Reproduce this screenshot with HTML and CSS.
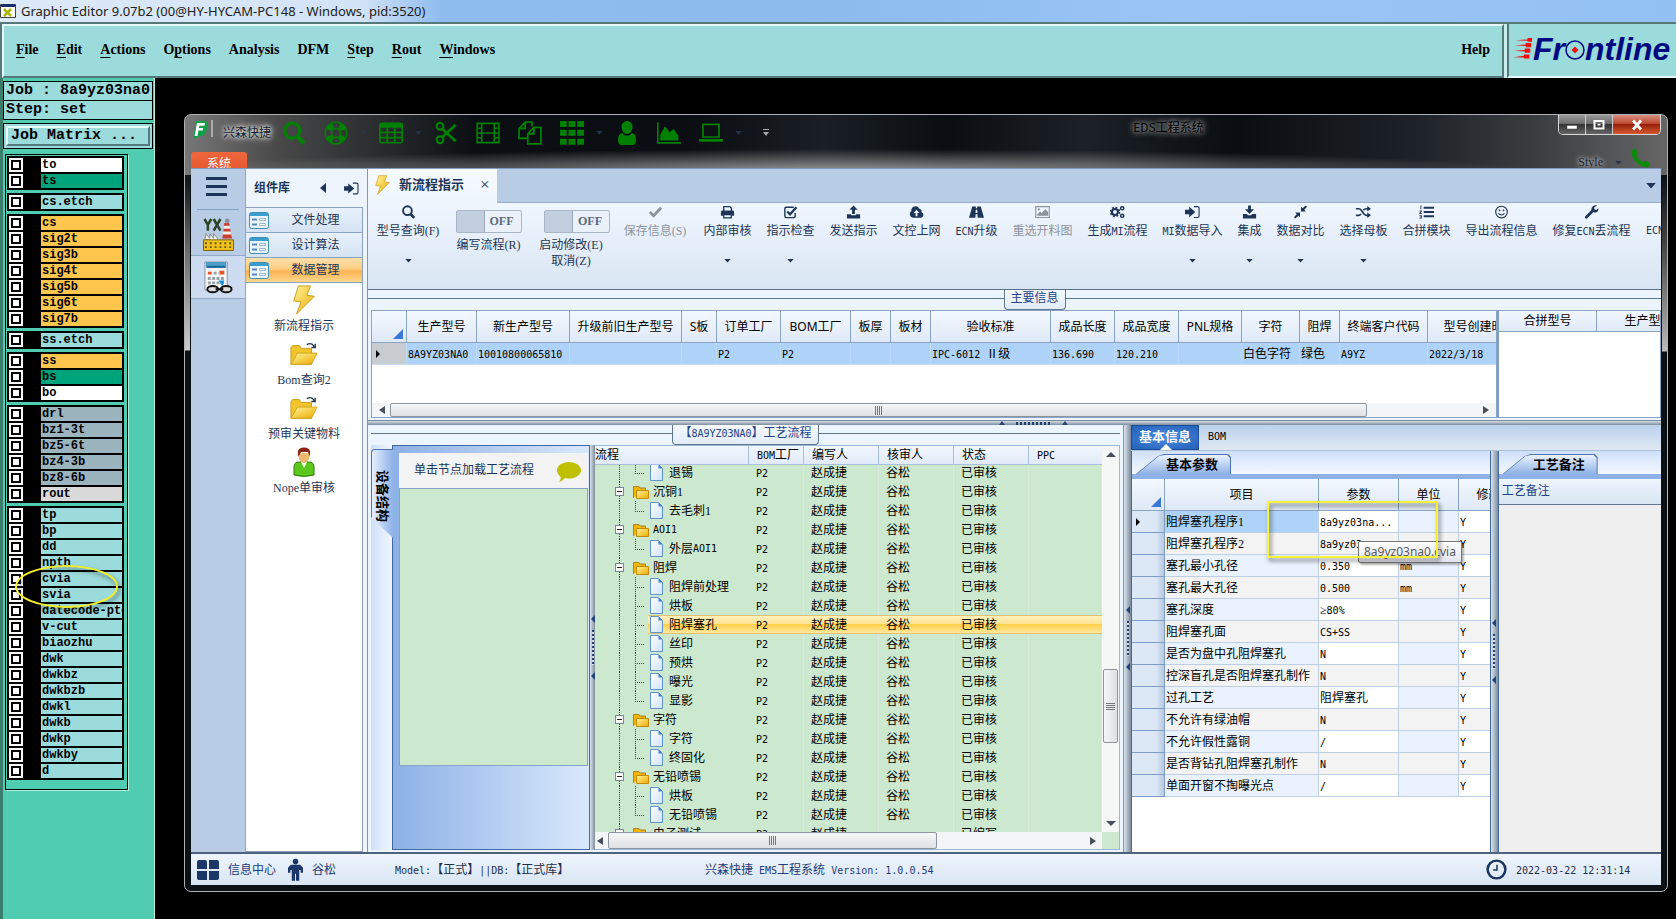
FILE: index.html
```html
<!DOCTYPE html>
<html lang="zh-CN">
<head>
<meta charset="utf-8">
<title>Graphic Editor 9.07b2</title>
<link rel="stylesheet" href="styles.css">
</head>
<body>
<svg class="defs" aria-hidden="true">
  <defs>
    <linearGradient id="gold" x1="0" y1="0" x2="1" y2="1"><stop offset="0" stop-color="#fff59a"/><stop offset="1" stop-color="#eda900"/></linearGradient>
    <linearGradient id="sheet" x1="0" y1="0" x2="1" y2="1"><stop offset="0" stop-color="#fff"/><stop offset="1" stop-color="#cfe2f8"/></linearGradient>
  </defs>
  <symbol id="search" viewBox="0 0 16 16"><circle cx="6.8" cy="6.5" r="5" fill="none" stroke="currentColor" stroke-width="2.2"/><path d="M10 10l4.6 4.8" stroke="currentColor" stroke-width="3"/></symbol>
  <symbol id="ring" viewBox="0 0 16 16"><circle cx="8" cy="8" r="7.2" fill="none" stroke="currentColor"/><circle cx="8" cy="8" r="3" fill="none" stroke="currentColor"/><circle cx="8" cy="8" r="5.1" fill="none" stroke="currentColor" stroke-width="4" stroke-dasharray="4 4" stroke-dashoffset="-2"/></symbol>
  <symbol id="table" viewBox="0 0 16 16"><path fill="currentColor" fill-rule="evenodd" d="M1.500 1h13A1.500 1.500 0 0 1 16 2.500v11a1.500 1.500 0 0 1-1.500 1.500h-13A1.500 1.500 0 0 1 0 13.500v-11A1.500 1.500 0 0 1 1.500 1zM1.200 4.500V7h3.700V4.500zm4.900 0V7h3.800V4.500zm5 0V7h3.700V4.500zM1.200 8.100v2.400h3.700V8.100zm4.900 0v2.400h3.800V8.100zm5 0v2.400h3.700V8.100zM1.200 11.600V14h3.700v-2.400zm4.900 0V14h3.800v-2.400zm5 0V14h3.700v-2.400z"/></symbol>
  <symbol id="cut" viewBox="0 0 16 16"><g fill="none" stroke="currentColor" stroke-width="1.500"><circle cx="4" cy="3.500" r="2.200"/><circle cx="4" cy="12.500" r="2.200"/><path d="M5.600 5.300L14.500 13.500M5.600 10.700L14.500 2.500" stroke-width="1.800"/></g></symbol>
  <symbol id="film" viewBox="0 0 18 16"><path fill="none" stroke="currentColor" stroke-width="1.200" d="M.8.8h16.400v14.400H.8zM4.300.8v14.400M13.700.8v14.400M4.300 8h9.400M.8 4.400h3.500M.8 8h3.500M.8 11.600h3.500M13.700 4.400h3.500M13.700 8h3.500M13.700 11.600h3.500"/></symbol>
  <symbol id="copy" viewBox="0 0 16 16"><path fill="none" stroke="currentColor" stroke-width="1.200" d="M6 11.500H.7V5L4.800.7H9.300v3M4.800.7V5H.7M6.500 8.500L10.600 4.200h4.700v11H6.500zM10.600 4.200v4.300H6.500"/></symbol>
  <symbol id="grid" viewBox="0 0 16 16"><path fill="currentColor" d="M0 0h4.500v4H0zM5.700 0h4.600v4H5.700zM11.500 0H16v4h-4.500zM0 5.900h4.500v4H0zM5.700 5.900h4.600v4H5.700zM11.500 5.900H16v4h-4.500zM0 11.800h4.500v4H0zM5.700 11.800h4.600v4H5.700zM11.500 11.800H16v4h-4.500z"/></symbol>
  <symbol id="user" viewBox="0 0 16 16"><path fill="currentColor" d="M8 0a3.600 3.600 0 0 1 3.600 4.200C11.600 6.700 10 8.600 8 8.600S4.400 6.700 4.400 4.200A3.600 3.600 0 0 1 8 0zM4.800 8C5.700 9.200 6.700 9.800 8 9.800s2.300-.6 3.200-1.800c1.900.3 2.800 2 2.800 4.800 0 1.800-.9 3.200-2.400 3.200H4.400C2.900 16 2 14.600 2 12.800 2 10 2.900 8.300 4.800 8z"/></symbol>
  <symbol id="chart" viewBox="0 0 18 16"><path fill="currentColor" d="M0 0h1.200v14.800H18V16H0zM2.400 13.600V9.500L6 3l3.500 4.500L12.500 5l3.500 5v3.600z"/></symbol>
  <symbol id="laptop" viewBox="0 0 18 16"><path fill="none" stroke="currentColor" stroke-width="1.300" d="M3 1.500h12v9.500H3z"/><path fill="currentColor" d="M0 12.500h18v1.300q0 .7-1 .7H1q-1 0-1-.7z"/></symbol>
  <symbol id="phone" viewBox="0 0 16 16"><path fill="currentColor" d="M1 2.500C1.500 1 3 .3 4 .5l2 3.500c0 1-1.200 1.600-1.200 2.200C5.500 8 8 10.600 10 11.300c.6 0 1.200-1.200 2-1.200l3.700 2.100c.3 1-.7 2.700-2 3.100C8 16.500-.5 8 1 2.500z"/></symbol>
  <symbol id="caret" viewBox="0 0 8 5"><path fill="currentColor" d="M0 0h8L4 4.500z"/></symbol>
  <symbol id="enter" viewBox="0 0 16 14"><path fill="currentColor" d="M0 4.500h4.500V1.500L11 7l-6.500 5.500v-3H0z"/><path fill="none" stroke="currentColor" stroke-width="1.200" d="M9.500 1.200h4q1.500 0 1.500 1.500v8.600q0 1.500-1.500 1.500h-4"/></symbol>
  <symbol id="check" viewBox="0 0 16 14"><path fill="none" stroke="currentColor" stroke-width="3" d="M2 7l4 4L14 2.500"/></symbol>
  <symbol id="print" viewBox="0 0 16 14"><path fill="none" stroke="currentColor" stroke-width="1.400" d="M4 6V1.200h6.500L12.200 3v3M4 9.700h8v3.500H4z"/><path fill="currentColor" d="M1 7q0-1.500 1.500-1.500h11Q15 5.500 15 7v4h-2.300V9H3.300v2H1z"/></symbol>
  <symbol id="checkbox" viewBox="0 0 16 14"><path fill="none" stroke="currentColor" stroke-width="1.500" d="M13 8v3.500q0 1.500-1.500 1.500h-8Q2 13 2 11.500v-8Q2 2 3.500 2h8"/><path fill="none" stroke="currentColor" stroke-width="2.300" d="M4.500 6.500l3 3L14.300 2"/></symbol>
  <symbol id="upload" viewBox="0 0 16 14"><path fill="currentColor" d="M8 0l4.500 4.500h-3V9h-3V4.500h-3zM1 9.500h4.500v1h5v-1H15V14H1z"/></symbol>
  <symbol id="download" viewBox="0 0 16 14"><path fill="currentColor" d="M6.500 0h3v4h3.300L8 9 3.200 4h3.300zM1 9h4l1.500 1.500h3L11 9h4v5H1z"/></symbol>
  <symbol id="cloud" viewBox="0 0 16 14"><path fill="currentColor" fill-rule="evenodd" d="M4 13a4 4 0 0 1-1.500-7.200A4.500 4.500 0 0 1 11 3.500a3 3 0 0 1 2.300 3.700A3 3 0 0 1 13 13zM8 4.500L4.800 8H7v3.500h2V8h2.200z"/></symbol>
  <symbol id="road" viewBox="0 0 16 14"><path fill="currentColor" fill-rule="evenodd" d="M3.500 1h3.800v2h1.400V1h3.800L16 13H9.200L9 9.500H7L6.800 13H0zM7.200 4.500L7 8h2l-.2-3.500z"/></symbol>
  <symbol id="image" viewBox="0 0 16 14"><path fill="none" stroke="currentColor" stroke-width="1.200" d="M.8 1.200h14.400v11.600H.8z"/><path fill="currentColor" d="M2.500 11V9l3-2.500L7 8l4-4 3 3v4z"/><circle cx="4" cy="4.200" r="1.200" fill="currentColor"/></symbol>
  <symbol id="cogs" viewBox="0 0 16 14"><g fill="none" stroke="currentColor"><circle cx="5.300" cy="7" r="3.200" stroke-width="2.200"/><circle cx="5.300" cy="7" r="4.900" stroke-width="1.500" stroke-dasharray="2 1.850"/><circle cx="13" cy="3" r="1.700" stroke-width="1.600"/><circle cx="13" cy="11" r="1.700" stroke-width="1.600"/></g></symbol>
  <symbol id="compress" viewBox="0 0 16 14"><path fill="currentColor" d="M8.500 6.500V1.500L10.300 3 13.500 0 15 1.500 12 4.500l1.700 2zM7.500 7.500v5L5.800 11 2.500 14 1 12.500l3-3-1.700-2z"/></symbol>
  <symbol id="shuffle" viewBox="0 0 16 14"><path fill="none" stroke="currentColor" stroke-width="1.800" d="M0 3.500h3q1.500 0 2.500 1.500l3 4q1 1.500 2.500 1.500h2M0 10.500h3q1.500 0 2.500-1.500M8 5.200q1.200-1.700 3-1.700h2"/><path fill="currentColor" d="M12 .5l4 3-4 3zM12 7.500l4 3-4 3z"/></symbol>
  <symbol id="list" viewBox="0 0 16 14"><path fill="currentColor" d="M5 1.500h11v2H5zM5 6h11v2H5zM5 10.500h11v2H5zM1.500 0h1v4h-1zM.5 5.500h2.500v1L1.500 8H3v1H.3V8L1.800 6.500H.5zM.5 10.500H3v3.500H.5v-.8h1.500v-.6H1v-.7h1v-.6H.5z"/></symbol>
  <symbol id="smile" viewBox="0 0 16 14"><circle cx="8" cy="7" r="6.200" fill="none" stroke="currentColor" stroke-width="1.200"/><path d="M4.800 8.500q3.200 3.500 6.400 0" fill="none" stroke="currentColor" stroke-width="1.200"/><circle cx="5.900" cy="5.200" r="1" fill="currentColor"/><circle cx="10.100" cy="5.200" r="1" fill="currentColor"/></symbol>
  <symbol id="wrench" viewBox="0 0 16 14"><path d="M2.500 12.500L9 6" stroke="currentColor" stroke-width="3" stroke-linecap="round"/><path fill="currentColor" d="M14 0L11 2v2l2 .8L15.300 3C16 6 13.500 8 11 7.500L8 6C7 2.500 10-.8 14 0z"/></symbol>
  <symbol id="bolt" viewBox="0 0 24 32"><path fill="url(#gold)" stroke="#c79a17" d="M6 1h13l-4 10 8 1L4 31l5-13-8-1z"/></symbol>
  <symbol id="folder" viewBox="0 0 30 26"><path fill="#f1c52b" stroke="#c69a1c" d="M1 24V6l2-2h7l2 3h11v17z"/><path fill="url(#gold)" stroke="#cfa21d" d="M1 24L8 12h21l-6 12z"/><path fill="none" stroke="#26384f" stroke-width="1.500" d="M18 3q5-3 8 2m1-3v4h-4"/></symbol>
  <symbol id="dir" viewBox="0 0 16 14"><path fill="#f5b400" stroke="#a9842c" d="M.5 13V1.500H6L7 3h5.500v2"/><path fill="url(#gold)" stroke="#c58b00" d="M3.500 5.500h12v8h-12z"/></symbol>
  <symbol id="page" viewBox="0 0 15 17"><path fill="url(#sheet)" stroke="#5e93cf" d="M1.500.5h8l4 4v12H1.500z"/><path fill="#3f7fd0" d="M9.500.5v4h4z"/></symbol>
  <symbol id="form" viewBox="0 0 20 17"><rect x=".5" y=".5" width="19" height="16" rx="2" fill="#eaf6fc" stroke="#3d8fb8"/><path fill="#3a9fd0" d="M1 1h18v3H1z"/><path fill="#5784c4" d="M3 6.500h5v2H3zM3 11.500h5v2H3z"/><path fill="#fff" stroke="#9ebad0" d="M10.500 6.500h6v2h-6zM10.500 11.500h6v2h-6z"/></symbol>
</svg>

<header class="app-title">
  <svg class="app-mark" viewBox="0 0 16 16"><path fill="#fff" stroke="#444" d="M.5 1.500h15v13H.5z"/><path fill="#1b2f6b" d="M1 1h14v3H1z"/><path d="M4 6l7 7M11 6l-7 7" stroke="#a9b400" stroke-width="2.500"/></svg>
  <span>Graphic Editor 9.07b2 (00@HY-HYCAM-PC148 - Windows, pid:3520)</span>
</header>
<div class="menu-row">
  <nav class="menubar">
    <button><u>F</u>ile</button><button><u>E</u>dit</button><button><u>A</u>ctions</button><button>O<u>p</u>tions</button><button>Analysis</button><button>DFM</button><button><u>S</u>tep</button><button><u>R</u>out</button><button><u>W</u>indows</button><button class="help">Help</button>
  </nav>
  <div class="brand">
    <svg class="stripes" viewBox="0 0 22 24"><path fill="#f00f0f" d="M3 2.500l13-1V0h5v4h-5V3zM2 8l12-1V5.500h6v4.500h-6V8.700zM1 14l12-1v-1.500h6V16h-6v-1.300zM0 21l12-1.500V18h6v4.500h-6V21.400z"/></svg>
    <span>Fr</span><svg class="target" viewBox="0 0 20 20"><circle cx="10" cy="10" r="9" fill="none" stroke="#000b82" stroke-width="1.500"/><path fill="#f01010" d="M10 6.500l3.500 3.500-3.500 3.500L6.500 10z"/></svg><span>ntline</span>
  </div>
</div>

<div class="workspace">
  <aside class="side">
    <div class="job">Job : 8a9yz03na0</div>
    <div class="job">Step: set</div>
    <div class="matrix"><button>Job Matrix ...</button></div>
    <div class="layers">
      <div class="set">
        <label class="white"><input type="checkbox"><span>to</span></label>
        <label class="green"><input type="checkbox"><span>ts</span></label>
      </div>
      <div class="set"><label><input type="checkbox"><span>cs.etch</span></label></div>
      <div class="set gold">
        <label><input type="checkbox"><span>cs</span></label>
        <label><input type="checkbox"><span>sig2t</span></label>
        <label><input type="checkbox"><span>sig3b</span></label>
        <label><input type="checkbox"><span>sig4t</span></label>
        <label><input type="checkbox"><span>sig5b</span></label>
        <label><input type="checkbox"><span>sig6t</span></label>
        <label><input type="checkbox"><span>sig7b</span></label>
      </div>
      <div class="set"><label><input type="checkbox"><span>ss.etch</span></label></div>
      <div class="set gold">
        <label><input type="checkbox"><span>ss</span></label>
        <label class="green"><input type="checkbox"><span>bs</span></label>
        <label class="white"><input type="checkbox"><span>bo</span></label>
      </div>
      <div class="set gray">
        <label><input type="checkbox"><span>drl</span></label>
        <label><input type="checkbox"><span>bz1-3t</span></label>
        <label><input type="checkbox"><span>bz5-6t</span></label>
        <label><input type="checkbox"><span>bz4-3b</span></label>
        <label><input type="checkbox"><span>bz8-6b</span></label>
        <label class="silver"><input type="checkbox"><span>rout</span></label>
      </div>
      <div class="set">
        <label><input type="checkbox"><span>tp</span></label>
        <label><input type="checkbox"><span>bp</span></label>
        <label><input type="checkbox"><span>dd</span></label>
        <label><input type="checkbox"><span>npth</span></label>
        <label><input type="checkbox"><span>cvia</span></label>
        <label><input type="checkbox"><span>svia</span></label>
        <label><input type="checkbox"><span>datecode-ptd</span></label>
        <label><input type="checkbox"><span>v-cut</span></label>
        <label><input type="checkbox"><span>biaozhu</span></label>
        <label><input type="checkbox"><span>dwk</span></label>
        <label><input type="checkbox"><span>dwkbz</span></label>
        <label><input type="checkbox"><span>dwkbzb</span></label>
        <label><input type="checkbox"><span>dwkl</span></label>
        <label><input type="checkbox"><span>dwkb</span></label>
        <label><input type="checkbox"><span>dwkp</span></label>
        <label><input type="checkbox"><span>dwkby</span></label>
        <label><input type="checkbox"><span>d</span></label>
        <i class="oval"></i>
      </div>
    </div>
  </aside>

  <div class="stage">
  <section class="win">
    <header class="caption">
      <div class="quick">
        <svg class="logo" viewBox="0 0 16 18"><path fill="#11a04a" d="M4 0h8q4 0 4 4l-2 7q-1 3-5 4l-8 3z"/><path fill="#fff" d="M5 2h8l-.6 2.700H7.300L6.900 7h4.400l-.6 2.500H6.400L5.500 15H2.600z"/></svg>
        <i class="bar"></i><b class="firm">兴森快捷</b>
        <button class="q" aria-label="查询"><svg><use href="#search"/></svg></button>
        <button class="q" aria-label="帮助"><svg><use href="#ring"/></svg></button>
        <svg class="dd"><use href="#caret"/></svg>
        <button class="q" aria-label="表格"><svg><use href="#table"/></svg></button>
        <svg class="dd"><use href="#caret"/></svg>
        <button class="q" aria-label="剪切"><svg><use href="#cut"/></svg></button>
        <button class="q" aria-label="影片"><svg><use href="#film"/></svg></button>
        <button class="q" aria-label="复制"><svg><use href="#copy"/></svg></button>
        <button class="q" aria-label="宫格"><svg><use href="#grid"/></svg></button>
        <svg class="dd"><use href="#caret"/></svg>
        <button class="q" aria-label="用户"><svg><use href="#user"/></svg></button>
        <button class="q" aria-label="图表"><svg><use href="#chart"/></svg></button>
        <button class="q" aria-label="电脑"><svg><use href="#laptop"/></svg></button>
        <svg class="dd"><use href="#caret"/></svg>
        <svg class="more" viewBox="0 0 8 8"><path fill="#aaa" d="M1 0h6v1H1zM1 3h6L4 7z"/></svg>
      </div>
      <h1>EDS工程系统</h1>
      <div class="ctl">
        <button aria-label="最小化"><svg viewBox="0 0 12 12"><path fill="#fff" stroke="#444" stroke-width=".5" d="M1 6.500h10v3.500H1z"/></svg></button>
        <button aria-label="最大化"><svg viewBox="0 0 12 12"><path fill="none" stroke="#fff" stroke-width="2" d="M1.500 2h9v7.500h-9z"/><path fill="#fff" d="M4.500 5h3v1.500h-3z"/></svg></button>
        <button class="close" aria-label="关闭"><svg viewBox="0 0 12 12"><path d="M2 1.500l8 9M10 1.500l-8 9" stroke="#fff" stroke-width="2.800"/></svg></button>
      </div>
      <button class="sys">系统</button>
      <div class="style"><span>Style</span><svg class="dd"><use href="#caret"/></svg><svg class="phone"><use href="#phone"/></svg></div>
    </header>

    <div class="body">
      <nav class="rail">
        <button class="burger" aria-label="菜单"><i></i><i></i><i></i></button>
        <button class="rail-btn" aria-label="YX"><svg viewBox="0 0 32 34"><path fill="none" stroke="#2c4424" stroke-width="2.600" d="M1.500 1l3.500 6 3.500-6M5 7v6M11 1l7 12M18 1l-7 12"/><path fill="#c9402e" d="M22 5h5l3 16h-10z"/><path fill="#eee" d="M21.600 8h6l.5 3h-7zM20.800 14h7.800l.6 3h-9z"/><circle cx="25" cy="3" r="2.500" fill="#8a94a6"/><path fill="#f6f6f6" stroke="#8a8a8a" d="M2 22l1-6 4 5v-5l4 5v-5l4 5v3z"/><path fill="#eec11e" stroke="#7a6210" d="M.5 22.500h31v11H.5z"/><path stroke="#6b5610" stroke-width="2" stroke-dasharray="2 3" d="M2 26h28M2 30h28"/></svg></button>
        <button class="rail-btn on" aria-label="日程"><svg viewBox="0 0 32 34"><path fill="#f4f6f8" stroke="#8b9299" d="M2 1h23v29H2z"/><path fill="#4f9cc9" d="M3 1h21v6H3z"/><path fill="#17679b" d="M4 5h19v2H4z"/><path fill="#e4572c" d="M5 11h4v3H5zM17 10h5v4h-5z"/><path stroke="#9aa0a6" stroke-width="3" stroke-dasharray="3 1.500" d="M5 18h17M5 22.500h17M11 12.500h5"/><path fill="#1492dc" d="M16 20h6l-2 6z"/><g fill="#ddd" stroke="#111" stroke-width="2"><ellipse cx="10" cy="29" rx="5.500" ry="3.200"/><ellipse cx="24" cy="29" rx="5.500" ry="3.200"/><path d="M13 29h8"/></g></svg></button>
      </nav>

      <aside class="lib">
        <header><h2>组件库</h2><svg class="tri" viewBox="0 0 6 10"><path fill="currentColor" d="M6 0v10L0 5z"/></svg><svg class="pin"><use href="#enter"/></svg></header>
        <div class="lib-in">
          <button class="acc"><svg><use href="#form"/></svg><span>文件处理</span></button>
          <button class="acc"><svg><use href="#form"/></svg><span>设计算法</span></button>
          <button class="acc on"><svg><use href="#form"/></svg><span>数据管理</span></button>
          <div class="apps">
            <button><svg><use href="#bolt"/></svg>新流程指示</button>
            <button><svg><use href="#folder"/></svg>Bom查询2</button>
            <button><svg><use href="#folder"/></svg>预审关键物料</button>
            <button><svg viewBox="0 0 22 30"><path fill="#5cc81e" stroke="#2f7d10" d="M1 28V20q0-5 5-5h10q5 0 5 5v8q-10 3-20 0z"/><path fill="#f3fbee" d="M8 15h6l-3 6z"/><path fill="#edb96c" d="M6 6h10v6q-2 4-5 4t-5-4z"/><path fill="#8b2317" d="M5 10V4q1-3.500 6-3.500T17 4v6l-2-5H8z"/></svg>Nope单审核</button>
          </div>
        </div>
      </aside>

      <main>
        <div class="tabs">
          <div class="tab"><svg class="tab-ico"><use href="#bolt"/></svg><b>新流程指示</b><button aria-label="关闭">×</button></div>
          <svg class="tabs-dd"><use href="#caret"/></svg>
        </div>
        <div class="ribbon">
          <button class="w82"><svg><use href="#search"/></svg>型号查询(F)<svg class="dd"><use href="#caret"/></svg></button>
          <label class="w79 tgl"><input type="checkbox"><span class="track">OFF</span>编写流程(R)</label>
          <label class="w86 tgl"><input type="checkbox"><span class="track">OFF</span>启动修改(E)<br>取消(Z)</label>
          <button class="w82" disabled><svg><use href="#check"/></svg>保存信息(S)</button>
          <button class="w63"><svg><use href="#print"/></svg>内部审核<svg class="dd"><use href="#caret"/></svg></button>
          <button class="w63"><svg><use href="#checkbox"/></svg>指示检查<svg class="dd"><use href="#caret"/></svg></button>
          <button class="w63"><svg><use href="#upload"/></svg>发送指示</button>
          <button class="w63"><svg><use href="#cloud"/></svg>文控上网</button>
          <button class="w57"><svg><use href="#road"/></svg><span><small>ECN</small>升级</span></button>
          <button class="w75" disabled><svg><use href="#image"/></svg>重选开料图</button>
          <button class="w75"><svg><use href="#cogs"/></svg><span>生成<small>MI</small>流程</span></button>
          <button class="w75"><svg><use href="#enter"/></svg><span><small>MI</small>数据导入</span><svg class="dd"><use href="#caret"/></svg></button>
          <button class="w39"><svg><use href="#download"/></svg>集成<svg class="dd"><use href="#caret"/></svg></button>
          <button class="w63"><svg><use href="#compress"/></svg>数据对比<svg class="dd"><use href="#caret"/></svg></button>
          <button class="w63"><svg><use href="#shuffle"/></svg>选择母板<svg class="dd"><use href="#caret"/></svg></button>
          <button class="w63"><svg><use href="#list"/></svg>合拼模块</button>
          <button class="w87"><svg><use href="#smile"/></svg>导出流程信息</button>
          <button class="w93"><svg><use href="#wrench"/></svg><span>修复<small>ECN</small>丢流程</span></button>
          <button class="last"><svg></svg><small>ECN</small></button>
        </div>

        <section class="info">
          <h3 class="legend shift"><span>主要信息</span></h3>
          <div class="info-row">
            <div class="sheet">
              <table class="grid-a">
                <colgroup><col class="c35"><col class="c70"><col class="c93"><col class="c112"><col class="c35"><col class="c64"><col class="c70"><col class="c40"><col class="c40"><col class="c120"><col class="c64"><col class="c64"><col class="c63"><col class="c58"><col class="c40"><col class="c88"><col class="c104"></colgroup>
                <thead><tr><th class="corner"></th><th>生产型号</th><th>新生产型号</th><th>升级前旧生产型号</th><th>S板</th><th>订单工厂</th><th>BOM工厂</th><th>板厚</th><th>板材</th><th>验收标准</th><th>成品长度</th><th>成品宽度</th><th>PNL规格</th><th>字符</th><th>阻焊</th><th>终端客户代码</th><th>型号创建时间</th></tr></thead>
                <tbody><tr><td class="ptr"></td><td><small>8A9YZ03NA0</small></td><td><small>10010800065810</small></td><td></td><td></td><td><small>P2</small></td><td><small>P2</small></td><td></td><td></td><td><small>IPC-6012 </small>Ⅱ级</td><td><small>136.690</small></td><td><small>120.210</small></td><td></td><td>白色字符</td><td>绿色</td><td><small>A9YZ</small></td><td><small>2022/3/18</small></td></tr></tbody>
              </table>
              <div class="hbar"><i class="la"></i><div class="thumb wide"><i class="grip"></i></div><i class="ra"></i></div>
            </div>
            <div class="sheet side-sheet">
              <table class="grid-b"><colgroup><col class="c98"><col class="c104"></colgroup><thead><tr><th>合拼型号</th><th>生产型号</th></tr></thead></table>
            </div>
          </div>
        </section>
        <div class="split-h"><i class="up"></i><i class="dots"></i><i class="up"></i></div>

        <div class="lower">
          <section class="flow">
            <h3 class="legend"><span>【<small>8A9YZ03NA0</small>】工艺流程</span></h3>
            <div class="flow-in">
              <div class="vstrip"><button class="vtab"><span>设备结构</span></button></div>
              <div class="dev">
                <header>单击节点加载工艺流程<svg viewBox="0 0 24 20"><path fill="#bfc000" d="M12 0c6.600 0 12 3.600 12 8.200s-5.400 8.300-12 8.300q-2 0-4-.5Q5.500 19 2 20q2-2.500 1.800-5Q0 12 0 8.200C0 3.600 5.400 0 12 0z"/></svg></header>
                <div class="pad"></div>
              </div>
              <div class="split-v"><i class="lf"></i><i class="vdots"></i><i class="lf"></i></div>
              <div class="tree">
                <div class="tree-main">
                <table class="tree-head"><colgroup><col class="c154"><col class="c55"><col class="c75"><col class="c75"><col class="c75"><col></colgroup><thead><tr><th>流程</th><th><small>BOM</small>工厂</th><th>编写人</th><th>核审人</th><th>状态</th><th><small>PPC</small></th></tr></thead></table>
                <div class="tree-body">
                <table><colgroup><col class="c154"><col class="c55"><col class="c75"><col class="c75"><col class="c75"><col></colgroup>
                <tbody>
                <tr class="leaf end"><td><svg><use href="#page"/></svg>退锡</td><td><small>P2</small></td><td>赵成捷</td><td>谷松</td><td>已审核</td><td></td></tr>
                <tr class="node"><td><i></i><svg><use href="#dir"/></svg>沉铜1</td><td><small>P2</small></td><td>赵成捷</td><td>谷松</td><td>已审核</td><td></td></tr>
                <tr class="leaf end"><td><svg><use href="#page"/></svg>去毛刺1</td><td><small>P2</small></td><td>赵成捷</td><td>谷松</td><td>已审核</td><td></td></tr>
                <tr class="node"><td><i></i><svg><use href="#dir"/></svg><small>AOI1</small></td><td><small>P2</small></td><td>赵成捷</td><td>谷松</td><td>已审核</td><td></td></tr>
                <tr class="leaf end"><td><svg><use href="#page"/></svg>外层<small>AOI1</small></td><td><small>P2</small></td><td>赵成捷</td><td>谷松</td><td>已审核</td><td></td></tr>
                <tr class="node"><td><i></i><svg><use href="#dir"/></svg>阻焊</td><td><small>P2</small></td><td>赵成捷</td><td>谷松</td><td>已审核</td><td></td></tr>
                <tr class="leaf"><td><svg><use href="#page"/></svg>阻焊前处理</td><td><small>P2</small></td><td>赵成捷</td><td>谷松</td><td>已审核</td><td></td></tr>
                <tr class="leaf"><td><svg><use href="#page"/></svg>烘板</td><td><small>P2</small></td><td>赵成捷</td><td>谷松</td><td>已审核</td><td></td></tr>
                <tr class="leaf sel"><td><svg><use href="#page"/></svg>阻焊塞孔</td><td><small>P2</small></td><td>赵成捷</td><td>谷松</td><td>已审核</td><td></td></tr>
                <tr class="leaf"><td><svg><use href="#page"/></svg>丝印</td><td><small>P2</small></td><td>赵成捷</td><td>谷松</td><td>已审核</td><td></td></tr>
                <tr class="leaf"><td><svg><use href="#page"/></svg>预烘</td><td><small>P2</small></td><td>赵成捷</td><td>谷松</td><td>已审核</td><td></td></tr>
                <tr class="leaf"><td><svg><use href="#page"/></svg>曝光</td><td><small>P2</small></td><td>赵成捷</td><td>谷松</td><td>已审核</td><td></td></tr>
                <tr class="leaf end"><td><svg><use href="#page"/></svg>显影</td><td><small>P2</small></td><td>赵成捷</td><td>谷松</td><td>已审核</td><td></td></tr>
                <tr class="node"><td><i></i><svg><use href="#dir"/></svg>字符</td><td><small>P2</small></td><td>赵成捷</td><td>谷松</td><td>已审核</td><td></td></tr>
                <tr class="leaf"><td><svg><use href="#page"/></svg>字符</td><td><small>P2</small></td><td>赵成捷</td><td>谷松</td><td>已审核</td><td></td></tr>
                <tr class="leaf end"><td><svg><use href="#page"/></svg>终固化</td><td><small>P2</small></td><td>赵成捷</td><td>谷松</td><td>已审核</td><td></td></tr>
                <tr class="node"><td><i></i><svg><use href="#dir"/></svg>无铅喷锡</td><td><small>P2</small></td><td>赵成捷</td><td>谷松</td><td>已审核</td><td></td></tr>
                <tr class="leaf"><td><svg><use href="#page"/></svg>烘板</td><td><small>P2</small></td><td>赵成捷</td><td>谷松</td><td>已审核</td><td></td></tr>
                <tr class="leaf end"><td><svg><use href="#page"/></svg>无铅喷锡</td><td><small>P2</small></td><td>赵成捷</td><td>谷松</td><td>已审核</td><td></td></tr>
                <tr class="node"><td><i></i><svg><use href="#dir"/></svg>电子测试</td><td><small>P2</small></td><td>赵成捷</td><td></td><td>已编写</td><td></td></tr>
                </tbody></table>
                </div>
                <div class="hbar tall"><i class="la"></i><div class="thumb mid"><i class="grip"></i></div><i class="ra"></i></div>
                </div>
                <div class="vbar"><i class="ua"></i><div class="vthumb"><i class="vgrip"></i></div><i class="da"></i></div>
              </div>
            </div>
          </section>
          <div class="split-v outer"><i class="lf"></i><i class="vdots"></i><i class="lf"></i></div>
          <section class="detail">
            <div class="dtabs"><button class="on">基本信息</button><button><small>BOM</small></button></div>
            <div class="dpanes">
              <div class="pane params">
                <div class="strip"><button class="slant"><span>基本参数</span></button></div>
                <div class="ptable">
                <table>
                  <colgroup><col class="c33"><col class="c154"><col class="c80"><col class="c60"><col class="c60"></colgroup>
                  <thead><tr><th class="corner"></th><th>项目</th><th>参数</th><th>单位</th><th>修改</th></tr></thead>
                  <tbody>
                  <tr class="cur"><td class="ptr"></td><td>阻焊塞孔程序1</td><td><small>8a9yz03na...</small></td><td></td><td><small>Y</small></td></tr>
                  <tr><td></td><td>阻焊塞孔程序2</td><td><small>8a9yz03na...</small></td><td></td><td><small>Y</small></td></tr>
                  <tr><td></td><td>塞孔最小孔径</td><td><small>0.350</small></td><td><small>mm</small></td><td><small>Y</small></td></tr>
                  <tr><td></td><td>塞孔最大孔径</td><td><small>0.500</small></td><td><small>mm</small></td><td><small>Y</small></td></tr>
                  <tr><td></td><td>塞孔深度</td><td>≥<small>80%</small></td><td></td><td><small>Y</small></td></tr>
                  <tr><td></td><td>阻焊塞孔面</td><td><small>CS+SS</small></td><td></td><td><small>Y</small></td></tr>
                  <tr><td></td><td>是否为盘中孔阻焊塞孔</td><td><small>N</small></td><td></td><td><small>Y</small></td></tr>
                  <tr><td></td><td>控深盲孔是否阻焊塞孔制作</td><td><small>N</small></td><td></td><td><small>Y</small></td></tr>
                  <tr><td></td><td>过孔工艺</td><td>阻焊塞孔</td><td></td><td><small>Y</small></td></tr>
                  <tr><td></td><td>不允许有绿油帽</td><td><small>N</small></td><td></td><td><small>Y</small></td></tr>
                  <tr><td></td><td>不允许假性露铜</td><td><small>/</small></td><td></td><td><small>Y</small></td></tr>
                  <tr><td></td><td>是否背钻孔阻焊塞孔制作</td><td><small>N</small></td><td></td><td><small>Y</small></td></tr>
                  <tr><td></td><td>单面开窗不掏曝光点</td><td><small>/</small></td><td></td><td><small>Y</small></td></tr>
                  </tbody>
                </table>
                </div>
                <div class="tip">8a9yz03na0.cvia</div>
                <i class="mark"></i>
              </div>
              <div class="split-v inner"><i class="lf"></i><i class="vdots"></i><i class="lf"></i></div>
              <div class="pane notes">
                <div class="strip"><button class="slant"><span>工艺备注</span></button></div>
                <label for="note">工艺备注</label>
                <textarea id="note"></textarea>
              </div>
            </div>
          </section>
        </div>
      </main>
    </div>

    <footer class="status">
      <svg class="tiles" viewBox="0 0 22 20"><path fill="#1b3768" d="M2 0h6q2 0 2 2v7H0V2q0-2 2-2zM12 0h8q2 0 2 2v7H12zM0 11h10v9H2q-2 0-2-2zM12 11h10v7q0 2-2 2h-8z"/></svg>
      <span class="s-info">信息中心</span>
      <svg class="man" viewBox="0 0 16 24"><circle cx="8" cy="3" r="3" fill="#1b3768"/><path fill="#1b3768" d="M3 6.500h10l3 3V15h-2.500v-3H12v11.500H8.500V16h-1v7.500H4V12H2.500v3H0V9.500z"/></svg>
      <span class="s-user">谷松</span>
      <span class="s-model"><small>Model:</small>【正式】<small>||DB:</small>【正式库】</span>
      <span class="s-ver">兴森快捷<small> EMS</small>工程系统<small> Version: 1.0.0.54</small></span>
      <svg class="clock" viewBox="0 0 22 22"><circle cx="11" cy="11" r="9.300" fill="none" stroke="#1b3560" stroke-width="2.600"/><path d="M11.500 6v5.500H7.500" fill="none" stroke="#1b3560" stroke-width="1.600"/></svg>
      <time><small>2022-03-22 12:31:14</small></time>
    </footer>
  </section>
  </div>
</div>
</body>
</html>
```

FILE: styles.css
```css
* { box-sizing: border-box; }
:root {
  --ui: "Liberation Serif", "Noto Sans CJK SC", sans-serif;
  --navy: #1e3557;
  --line: #8aa4c4;
}
body {
  margin: 0;
  height: 100vh;
  display: flex;
  flex-direction: column;
  overflow: hidden;
  background: #000;
  font: 12px/16px var(--ui);
  color: #000;
}
button { border: 0; padding: 0; background: none; font: inherit; color: inherit; white-space: nowrap; }
h1, h2, h3 { margin: 0; font: inherit; }
i { display: block; }
small { font-family: "DejaVu Sans Mono", monospace; font-size: 10px; line-height: 1; white-space: pre; }
svg { display: block; flex: none; }
.defs { position: absolute; width: 0; height: 0; }
table { border-collapse: separate; border-spacing: 0; table-layout: fixed; width: 100%; }
th { font-weight: normal; padding: 0; white-space: nowrap; overflow: hidden; }
td { padding: 0 0 0 1px; white-space: nowrap; overflow: hidden; }

/* outer application */
.app-title {
  flex: none;
  height: 22px;
  display: flex;
  align-items: center;
  gap: 5px;
  font: 13px/20px "Noto Sans", sans-serif;
  color: #222;
  background: linear-gradient(90deg, #dce9f7 0, #d3e4f7 360px, #8fbcee 440px, #8dbbee 50%, #99c5f6 70%, #94c1f3);
}
.app-mark { width: 16px; height: 16px; }
.menu-row { flex: none; display: flex; gap: 3px; height: 56px; background: #c9ecec; border-top: 2px solid #55787a; border-left: 2px solid #55787a; }
.menubar {
  flex: 1;
  display: flex;
  align-items: center;
  gap: 18px;
  padding: 0 12px 2px;
  background: #9cdbdb;
  border: solid #e6fafa;
  border-width: 2px;
  border-right-color: #55787a;
  border-bottom-color: #55787a;
  font: bold 14px/18px "Liberation Serif", serif;
}
.menubar u { text-underline-offset: 3px; text-decoration-thickness: 1px; }
.menubar .help { margin-left: auto; }
.brand {
  width: 169px;
  display: flex;
  align-items: center;
  padding: 0 2px 2px 4px;
  background: #9cdbdb;
  border: solid #e6fafa;
  border-width: 0 0 2px 0;
  border-left: 2px solid #55787a;
  overflow: hidden;
  font: italic bold 32px/40px "Liberation Sans", sans-serif;
  color: #000b82;
}
.stripes { width: 20px; height: 24px; }
.target { width: 20px; height: 20px; margin-top: 2px; }

.workspace { flex: 1; min-height: 0; display: flex; }
.side {
  flex: none;
  width: 155px;
  padding: 3px 1px 0 0;
  background: #50cdb0;
  border-left: 3px solid #3b7d6c;
  border-right: 1px solid #b4efe0;
  font: bold 15px/18px "Liberation Mono", monospace;
}
.job { height: 19px; padding-left: 2px; background: #9cdbdb; border: 1px solid #000; border-bottom-width: 0; white-space: nowrap; }
.job + .job { border-bottom-width: 1px; height: 20px; }
.matrix { margin-top: 3px; padding: 2px; border: 1px solid #000; background: #9cdbdb; }
.matrix button { display: block; width: 100%; height: 20px; padding-left: 3px; text-align: left; border: 2px solid; border-color: #e6fafa #55787a #55787a #e6fafa; line-height: 16px; }
.layers {
  width: 123px;
  margin: 5px 0 0 2px;
  padding: 1px 3px 9px 1px;
  display: flex;
  flex-direction: column;
  gap: 3px;
  border: 1px solid #000;
  box-shadow: 1px 1px 0 #b4efe0;
  font-size: 12px;
}
.set { position: relative; padding: 1px 2px; background: #000; --tone: #9cdbdb; }
.set.gold { --tone: #ffc64d; }
.set.gray { --tone: #9bb4bd; }
.set label { display: flex; gap: 18px; height: 16px; padding: 1px 0; }
.set .white { --tone: #fff; }
.set .green { --tone: #00a47a; }
.set .silver { --tone: #d9d9d9; }
.set input { appearance: none; flex: none; margin: 0; width: 14px; height: 14px; border: 2px solid #fff; background: #fff; box-shadow: inset 0 0 0 2px #000; }
.set span { flex: 1; min-width: 0; overflow: hidden; padding-left: 1px; line-height: 14px; white-space: nowrap; background: var(--tone); }
.oval { position: absolute; left: 8px; top: 59px; width: 103px; height: 43px; border: 2px solid #f3ee2c; border-radius: 50%; filter: drop-shadow(2px 3px 2px #0008); }

/* window */
.stage { flex: 1; min-width: 0; display: flex; padding: 36px 8px 27px 29px; }
.win {
  flex: 1;
  min-width: 0;
  display: flex;
  flex-direction: column;
  padding: 0 6px 6px;
  border: 1px solid #aeb2b4;
  border-radius: 7px;
  background:
    linear-gradient(#0000 60px, #666 130px, #ccc 235px, #0000 236px) left / 5px 100% no-repeat,
    linear-gradient(#0000 60px, #444 130px, #bbb 236px, #0000 237px) right / 5px 100% no-repeat,
    radial-gradient(ellipse 700px 24px at 660px 58px, #a0a0a0, #0000) no-repeat,
    linear-gradient(90deg, #777 0, #4a4a4a 90px, #0b0f13 290px, #0a0e12 500px, #1a1f25 640px, #0a0e12 760px, #1c2127 900px, #0a0e12 1050px, #1d2228 1230px, #3a3d40 1350px, #666 100%) top / 100% 60px no-repeat,
    #0b1014;
}
.caption { flex: none; height: 53px; display: grid; grid-template: 37px 16px / auto 1fr auto; }
.quick { display: flex; align-items: center; padding-bottom: 2px; color: #008000; }
.logo { width: 16px; height: 18px; margin: 0 3px 6px 1px; }
.bar { width: 2px; height: 17px; margin: 0 10px 8px 0; background: #aaa; }
.firm { width: 50px; font-weight: normal; color: #101c30; text-shadow: 0 0 3px #ddd, 0 0 5px #ccc, 0 0 7px #bbb, 0 0 8px #aaa; }
.q { width: 42px; display: flex; justify-content: center; }
.q svg { width: 24px; height: 24px; }
.dd { width: 7px; height: 4px; margin: 0 3px; color: #24364f; }
.more { width: 8px; height: 8px; margin: 0 17px; }
.caption h1 { padding-right: 8px; text-align: center; font: 12px/23px "Noto Sans CJK SC", sans-serif; color: #000; text-shadow: 0 0 4px #999, 0 0 6px #888, 0 0 9px #777; }
.ctl { display: flex; height: 20px; border: 1px solid #d8d8d8; border-top: 0; border-radius: 0 0 5px 5px; overflow: hidden; }
.ctl button { width: 27px; display: grid; place-items: center; border-right: 1px solid #ccc; background: linear-gradient(#9a9a9a, #6d6d6d 45%, #333 50%, #666); }
.ctl .close { width: 47px; border: 0; background: linear-gradient(#d8907f, #bf4a32 45%, #98200a 50%, #d65a30); }
.ctl svg { width: 12px; height: 12px; }
.sys { width: 56px; height: 16px; overflow: hidden; line-height: 24px; border-radius: 3px 3px 0 0; color: #fff; background: linear-gradient(#f0663c, #e65a34); justify-self: start; }
.style { grid-column: 3; display: flex; justify-content: flex-end; align-items: flex-end; height: 16px; margin-right: 10px; gap: 3px; color: #1b2533; line-height: 12px; }
.style span { text-shadow: 0 0 4px #ccc, 0 0 5px #bbb; }
.style .dd { margin: 0 5px 3px 9px; }
.phone { width: 21px; height: 20px; color: #0a8a0a; }

.body { flex: 1; min-height: 0; display: flex; border-top: 1px solid #7f9bbd; background: #ecf3fb; }
.rail { flex: none; width: 55px; background: #b9cce6; border-right: 1px solid #8fa8c8; }
.burger { display: flex; flex-direction: column; gap: 5px; width: 42px; height: 41px; margin: 0 auto; padding: 8px 10px 0 9px; border-bottom: 1px solid #86a0c4; }
.burger i { width: 21px; height: 3px; background: var(--navy); }
.rail-btn { display: grid; place-items: center; width: 100%; height: 46px; padding-top: 3px; border-bottom: 1px solid #93abc9; }
.rail-btn.on { background: #cddcf0; height: 43px; padding-top: 0; }
.rail-btn svg { width: 31px; height: 33px; }

.lib { flex: none; width: 122px; display: flex; flex-direction: column; color: var(--navy); border-right: 1px solid #7f97b8; background: #edf4fc; }
.lib header { height: 38px; display: flex; align-items: center; padding: 0 8px; }
.lib h2 { flex: 1; font-size: 12px; font-weight: bold; }
.tri { width: 6px; height: 10px; margin-right: 18px; }
.pin { width: 15px; height: 13px; }
.lib-in { flex: 1; width: 117px; display: flex; flex-direction: column; border: solid #8aa0bd; border-width: 1px 1px 1px 0; }
.acc { display: flex; align-items: center; height: 25px; padding-left: 3px; border-bottom: 1px solid #8aa4c4; background: linear-gradient(#e8f1fb, #d5e2f2); }
.acc svg { width: 20px; height: 17px; }
.acc span { flex: 1; text-align: center; }
.acc.on { background: linear-gradient(#fbe0ac, #fdce82 45%, #fcb254 55%, #fdd88c); }
.apps { flex: 1; display: flex; flex-direction: column; align-items: center; background: #fff; padding-top: 2px; }
.apps button { display: flex; flex-direction: column; align-items: center; gap: 3px; height: 54px; }
.apps svg { width: 28px; height: 30px; }

main { flex: 1; min-width: 0; display: flex; flex-direction: column; background: #ecf4fd; }
.tabs { flex: none; height: 34px; display: flex; justify-content: space-between; background: #b9cce6; border-bottom: 1px solid #96acc9; color: var(--navy); }
.tab { width: 129px; height: 34px; display: flex; align-items: center; gap: 9px; padding: 0 0 2px 7px; background: linear-gradient(#f7fbff, #eef5fd); font-size: 13px; }
.tab-ico { width: 15px; height: 20px; }
.tab button { margin-left: 7px; font-size: 17px; }
.tabs-dd { width: 10px; height: 6px; margin: 14px 5px 0 0; }
.ribbon { flex: none; display: flex; height: 87px; overflow: hidden; color: var(--navy); background: linear-gradient(#eff6fe, #d9e5f3); border-bottom: 1px solid #5a6f88; }
.ribbon > * { flex: none; display: flex; flex-direction: column; align-items: center; padding: 2px 2px 0 0; white-space: nowrap; }
.ribbon svg { width: 15px; height: 14px; margin-bottom: 4px; }
.ribbon .dd { width: 7px; height: 4px; margin: 20px 0 0; }
.ribbon button:disabled { color: #8d949e; }
.ribbon .tgl { padding-top: 7px; text-align: center; display: block; }
.tgl input { position: absolute; opacity: 0; }
.track { display: block; width: 66px; height: 23px; margin: 0 auto 4px; padding-left: 26px; border: 1px solid #a9b6c6; border-radius: 2px; line-height: 20px; font-weight: bold; color: #5c6b80; background: linear-gradient(90deg, #c3cfde 27px, #98a8bc 27px, #98a8bc 28px, #eaf1f9 28px); }
.w86 .track { margin-left: 15px; }
.w39 { width: 39px; } .w57 { width: 57px; } .w63 { width: 63px; } .w75 { width: 75px; } .w79 { width: 79px; }
.w82 { width: 82px; } .w86 { width: 86px; } .w87 { width: 87px; } .w93 { width: 93px; }
.last small { padding: 3px 0 0 7px; }

.legend { display: flex; height: 20px; color: #24438a; }
.legend::before, .legend::after { content: ""; flex: 1 0 0; height: 1px; margin-top: 8px; background: #5f7690; }
.legend.shift::before { flex-basis: 40px; }
.legend span { padding: 0 6px; line-height: 16px; height: 20px; border: 1px solid #5f7690; border-top: 0; border-radius: 0 0 4px 4px; background: linear-gradient(#f4f8fd, #e2ecf7); }
.info { flex: none; padding-bottom: 2px; }
.info-row { display: flex; height: 108px; padding-left: 3px; }
.sheet { flex: 1; min-width: 0; display: flex; flex-direction: column; overflow: hidden; background: #fff; border: 1px solid var(--line); }
.side-sheet { flex: 0 0 164px; border-left: 2px solid #7f9cc4; }
.sheet table { flex: none; }
.grid-a { width: 1160px; }
.grid-b { width: 202px; }
.sheet th, .ptable th { font-family: "Noto Sans", "Noto Sans CJK SC", sans-serif; border: solid var(--line); border-width: 0 1px 1px 0; background: linear-gradient(#f3f8fe, #dfe9f6); }
.grid-a th, .ptable th { height: 32px; }
.grid-b th { height: 21px; }
.grid-a td { height: 22px; background: #afd3f8; border-right: 1px solid #bcd9f8; border-bottom: 1px solid #c9def4; }
.corner { position: relative; }
.corner::after { content: ""; position: absolute; right: 3px; bottom: 3px; border: 5px solid #3a78d8; border-top-color: #0000; border-left-color: #0000; }
.ptr::after { content: ""; display: block; width: 0; border: 4px solid #0000; border-left: 4px solid #000; border-right: 0; margin-left: 3px; }
.grid-a td.ptr { background: #c9cdd2; }
.c33 { width: 33px; } .c35 { width: 35px; } .c40 { width: 40px; } .c55 { width: 55px; } .c58 { width: 58px; } .c60 { width: 60px; }
.c63 { width: 63px; } .c64 { width: 64px; } .c70 { width: 70px; } .c75 { width: 75px; } .c80 { width: 80px; } .c88 { width: 88px; } .c93 { width: 93px; }
.c98 { width: 98px; } .c104 { width: 104px; } .c112 { width: 112px; } .c120 { width: 120px; } .c154 { width: 154px; }

.hbar { flex: none; margin-top: auto; height: 14px; display: flex; align-items: center; padding: 0 7px; background: #f4f5f6; }
.hbar.tall { height: 17px; padding: 0 6px 0 2px; }
.la, .ra, .lf { width: 0; height: 0; border: 4px solid #0000; }
.la { border-right: 6px solid #4a5058; border-left: 0; margin-right: 5px; }
.ra { border-left: 6px solid #4a5058; border-right: 0; margin-left: auto; }
.thumb { height: 100%; display: grid; place-items: center; border: 1px solid #8e959d; border-radius: 2px; background: linear-gradient(#f5f6f7, #dfe1e5); }
.thumb.wide { width: 88%; }
.thumb.mid { width: 66%; }
.grip { width: 7px; height: 9px; background: repeating-linear-gradient(90deg, #777 0 1px, #0000 1px 2px); }
.split-h { flex: none; height: 5px; display: flex; justify-content: center; align-items: center; gap: 11px; padding-left: 38px; border-top: 1px solid #7d8c9b; background: linear-gradient(#d4dee8, #7e8d9c); }
.up { border: 3px solid #0000; border-bottom: 4px solid #2a4478; border-top: 0; }
.dots { width: 35px; height: 3px; background: repeating-linear-gradient(90deg, #23406f 0 2px, #0000 2px 4px); }

.lower { flex: 1; min-height: 0; display: grid; grid-template-columns: minmax(0, 756fr) 7px minmax(0, 530fr); }
.flow { display: flex; flex-direction: column; min-height: 0; padding: 0 3px 2px; background: #ecf4fd; border-right: 1px solid #7f96b4; }
.flow-in { flex: 1; min-height: 0; display: flex; }
.vstrip { width: 21px; padding-top: 4px; background: linear-gradient(90deg, #cfe0f7, #f0f6ff); }
.vtab { display: block; width: 22px; height: 89px; padding: 9px 0 0 2px; text-align: left; font: bold 13px/18px "Noto Sans CJK SC", sans-serif; background: linear-gradient(90deg, #e5effd, #8fb2e8); border-left: 1px solid #4d73b5; border-top: 1px solid #4d73b5; border-top-left-radius: 4px; clip-path: polygon(0 0, 100% 0, 100% 100%, 0 68px); }
.vtab span { writing-mode: vertical-rl; text-orientation: sideways; }
.dev { width: 198px; padding: 7px 1px 0 6px; border: 1px solid #4068a5; background: linear-gradient(90deg, #8db1e6, #d9e8fb); }
.dev header { display: flex; align-items: center; justify-content: space-between; height: 35px; padding: 0 7px 1px 15px; background: #f3f3f3; color: var(--navy); }
.dev header svg { width: 24px; height: 20px; margin-top: 3px; }
.pad { height: 278px; background: #cce8cf; border: 1px solid #86a3c6; }
.split-v { width: 5px; display: flex; flex-direction: column; align-items: center; justify-content: center; gap: 7px; background: linear-gradient(90deg, #dbe4ee, #7d8c9b); overflow: hidden; }
.split-v.outer, .split-v.inner { width: 7px; }
.lf { border-width: 4px 4px 4px 0; border-right-color: #22427c; }
.vdots { width: 2px; height: 35px; background: repeating-linear-gradient(#23406f 0 2px, #fff8 2px 4px); }
.tree { flex: 1; min-width: 0; display: flex; border: 1px solid #9db7d8; border-left: 0; background: #cce8cf; }
.tree-main { flex: 1; min-width: 0; display: flex; flex-direction: column; }
.tree-head th { height: 19px; text-align: left; padding-left: 8px; border-right: 1px solid #a9c0dc; border-bottom: 1px solid #a9c0dc; background: linear-gradient(#f2f7fe, #e0eaf7); }
.tree-head th:first-child { padding-left: 0; }
.tree-head th:last-child { border-right: 0; }
.tree-body { flex: 1; min-height: 0; overflow: hidden; display: flex; flex-direction: column; justify-content: flex-start; }
.tree-body table { margin-top: -2px; }
.tree-body td { height: 19px; padding: 0 0 0 7px; line-height: 18px; border-right: 1px solid #d8eadb; }
.tree-body td:first-child { display: flex; align-items: center; padding: 0; background: repeating-linear-gradient(#444 0 1px, #0000 1px 2px) 24px 0 / 1px 100% no-repeat; border: 0; }
.node i { width: 9px; height: 9px; margin: 0 9px 0 20px; border: 1px solid #7b8794; background: linear-gradient(#222, #222) center / 5px 1px no-repeat, #fff; }
.node svg { width: 16px; height: 14px; margin-right: 4px; }
.leaf td:first-child::before { content: ""; width: 10px; height: 19px; margin: 0 4px 0 40px; background: repeating-linear-gradient(#444 0 1px, #0000 1px 2px) 0 0 / 1px 100% no-repeat, repeating-linear-gradient(90deg, #444 0 1px, #0000 1px 2px) 0 10px / 100% 1px no-repeat; }
.leaf.end td:first-child::before { background-size: 1px 10px, 100% 1px; }
.leaf svg { width: 15px; height: 17px; margin-right: 5px; }
.sel td { border-color: #0000; background: linear-gradient(#e0c272 1px, #fff0bd 1px, #ffe394 45%, #ffd04c 50%, #ffe79c 94%, #e0c272 94%); }
.tree-body .sel td:first-child { background: repeating-linear-gradient(#444 0 1px, #0000 1px 2px) 24px 0 / 1px 100% no-repeat, linear-gradient(#e0c272 1px, #fff0bd 1px, #ffe394 45%, #ffd04c 50%, #ffe79c 94%, #e0c272 94%) 53px 0 no-repeat; }
.vbar { width: 17px; margin-bottom: 17px; padding: 6px 1px; display: flex; flex-direction: column; align-items: center; background: #f5f6f6; }
.ua, .da { border: 5px solid #0000; }
.ua { border-bottom-color: #4a5058; border-top: 0; }
.da { border-top-color: #4a5058; border-bottom: 0; margin-top: auto; }
.vthumb { width: 15px; height: 74px; margin-top: auto; display: grid; place-items: center; border: 1px solid #8e959d; border-radius: 2px; background: linear-gradient(90deg, #f5f6f7, #dcdfe3); }
.vthumb + .da { margin-top: 78px; }
.vgrip { width: 9px; height: 7px; background: repeating-linear-gradient(#777 0 1px, #0000 1px 2px); }

.detail { display: flex; flex-direction: column; min-height: 0; }
.dtabs { flex: none; display: flex; gap: 9px; height: 26px; border-bottom: 1px solid #aebfd6; background: linear-gradient(#bcd1ec, #dfe8f4); }
.dtabs button { padding-bottom: 3px; }
.dtabs .on { position: relative; width: 68px; font: bold 13px/18px "Noto Sans CJK SC", sans-serif; color: #fff; border: 1px solid #1d4c97; background: radial-gradient(#4a8ce0, #2460b8); }
.dtabs .on::after { content: ""; position: absolute; left: 28px; bottom: -1px; border: 6px solid #0000; border-bottom-color: #fff; border-top: 0; }
.dpanes { flex: 1; min-height: 0; display: flex; }
.pane { position: relative; display: flex; flex-direction: column; min-width: 0; border-left: 1px solid #4068a5; }
.params { flex: 359 0 0; border-right: 1px solid #4068a5; }
.notes { flex: 163 0 0; }
.strip { flex: none; height: 28px; padding: 3px 0 0 4px; border-bottom: 5px solid #8fb2e6; background: linear-gradient(#cfe0fa, #f4f8fe); }
.slant { width: 95px; height: 20px; padding-left: 30px; text-align: left; font: bold 13px/18px "Noto Sans CJK SC", sans-serif; background: #4d73b5; clip-path: polygon(0 100%, 22px 2px, 28px 0, 92px 0, 95px 3px, 95px 100%); }
.slant span { display: block; margin: 1px 1px 0 -29px; padding-left: 29px; height: 19px; background: linear-gradient(#eaf2fe, #8fb2e6); clip-path: polygon(0 100%, 22px 1px, 28px 0, 90px 0, 93px 3px, 93px 100%); }
.ptable { flex: 1; min-height: 0; overflow: hidden; background: #fff; }
.ptable table { width: 387px; }
.ptable td { height: 22px; border: solid #bfd0e6; border-width: 0 1px 1px 0; }
.ptable td:first-child { background: linear-gradient(90deg, #dce8f6 75%, #b6c9e0); border-color: #7f9cc4; }
.ptable td:nth-child(2), .ptable td:nth-child(4) { background: #e9f2fd; }
.ptable tbody tr:nth-child(even) td:not(:first-child) { background: #f3f3f3; }
.ptable .cur td:nth-child(2) { background: #afd3f8; }
.tip { position: absolute; left: 226px; top: 90px; height: 22px; padding: 0 5px; border: 1px solid #767676; border-radius: 2px; background: linear-gradient(#fff, #e4e5f0); color: #5a5a5a; font: 12px/20px "Noto Sans", sans-serif; white-space: nowrap; box-shadow: 2px 2px 2px #0004; }
.mark { position: absolute; left: 135px; top: 50px; width: 171px; height: 57px; border: 2px solid #f6f238; filter: drop-shadow(2px 3px 2px #0009); }
.notes label { flex: none; height: 26px; padding: 4px 3px; color: #24438a; border-bottom: 1px solid #5f7690; background: linear-gradient(#eef5fd, #d9e5f3); }
.notes textarea { flex: 1; width: 100%; border: 0; resize: none; background: #efefef; }

.status { flex: none; height: 33px; display: flex; align-items: center; padding: 0 30px 0 6px; color: #1e3c78; border-top: 2px solid #4e627f; background: linear-gradient(#eef5fd, #d9e5f3); }
.tiles { width: 22px; height: 20px; margin-right: 9px; }
.s-info { width: 60px; }
.man { width: 15px; height: 24px; margin-right: 9px; }
.s-user { width: 83px; }
.s-model { flex: 310 0 0; color: #222f4a; }
.s-ver { flex: 781 0 0; }
.clock { width: 21px; height: 21px; margin-right: 9px; }
.status time { width: 115px; color: #222f4a; }
```
